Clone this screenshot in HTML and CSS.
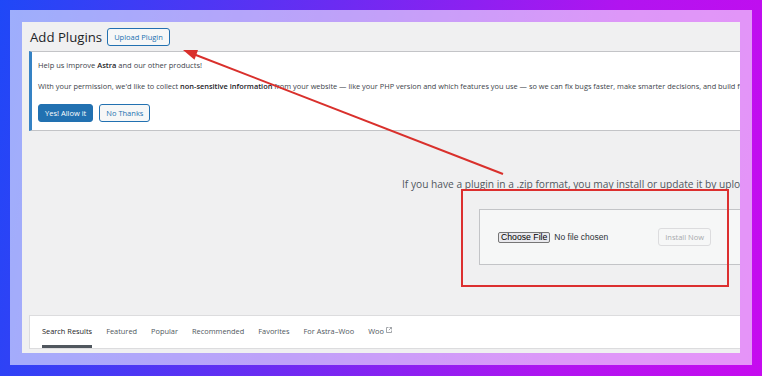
FILE: index.html
```html
<!DOCTYPE html>
<html>
<head>
<meta charset="utf-8">
<link rel="stylesheet" href="styles.css">
</head>
<body>
<div class="frame">
  <div class="wp">
    <div class="title-row">
      <h1 class="title">Add Plugins</h1>
      <span class="btn-outline">Upload Plugin</span>
    </div>
    <div class="notice">
      <p class="notice-line">Help us improve <b>Astra</b> and our other products!</p>
      <p class="notice-line second">With your permission, we'd like to collect <b>non-sensitive information</b> from your website — like your PHP version and which features you use — so we can fix bugs faster, make smarter decisions, and build features that actually matter to you.</p>
      <div class="notice-actions">
        <span class="btn-primary">Yes! Allow it</span>
        <span class="btn-secondary">No Thanks</span>
      </div>
    </div>
    <div class="upload">
      <p class="upload-help">If you have a plugin in a .zip format, you may install or update it by uploading it here.</p>
      <div class="upload-form">
        <span class="file-btn">Choose File</span>
        <span class="file-name">No file chosen</span>
        <span class="btn-disabled">Install Now</span>
      </div>
    </div>
    <div class="tabs">
      <span class="tab active">Search Results</span>
      <span class="tab">Featured</span>
      <span class="tab">Popular</span>
      <span class="tab">Recommended</span>
      <span class="tab">Favorites</span>
      <span class="tab">For Astra–Woo</span>
      <span class="tab">Woo <svg class="ext" width="6" height="6" viewBox="0 0 6 6"><path d="M2.5 0.5H0.5V5.5H5.5V3.5M3.5 0.5H5.5V2.5M5.5 0.5L2.8 3.2" fill="none" stroke="#8c8f94" stroke-width="0.8"/></svg></span>
    </div>
  </div>
</div>
<svg class="annot" width="762" height="376" viewBox="0 0 762 376">
  <line x1="503" y1="174" x2="192" y2="53.5" stroke="#d9302c" stroke-width="2"/>
  <polygon points="183,50 194.5,59.8 198,50" fill="#d9302c"/>
  <rect x="462" y="190" width="266" height="96" fill="none" stroke="#dc2f2f" stroke-width="2"/>
</svg>
</body>
</html>
```
FILE: styles.css
```css
html, body {
  margin: 0;
  padding: 0;
}
body {
  width: 762px;
  height: 376px;
  overflow: hidden;
  position: relative;
  background: linear-gradient(100deg, #1f48f7 0%, #6a2cf2 40%, #b114f0 75%, #c60bef 100%);
  font-family: "Open Sans", "Noto Sans", sans-serif;
}
.frame {
  position: absolute;
  left: 10px;
  top: 10px;
  width: 718px;
  height: 331px;
  padding: 12px;
  background: rgba(255, 255, 255, 0.56);
}
.wp {
  width: 718px;
  height: 331px;
  background: #f0f0f1;
  overflow: hidden;
  display: flex;
  flex-direction: column;
  padding-left: 7px;
  box-sizing: border-box;
}
.title-row {
  display: flex;
  align-items: center;
  gap: 5px;
  margin-top: 6px;
  height: 18px;
}
.title {
  margin: 0 0 0 1px;
  font-size: 13.2px;
  font-weight: 400;
  color: #1d2327;
  line-height: 18px;
}
.btn-outline {
  box-sizing: border-box;
  height: 18px;
  padding: 0 6px;
  border: 1px solid #2271b1;
  border-radius: 3px;
  background: #f6f7f7;
  color: #2271b1;
  font-size: 7.5px;
  line-height: 16px;
}
.notice {
  margin-top: 5px;
  width: 760px;
  height: 80px;
  box-sizing: border-box;
  background: #fff;
  border: 1px solid #c3c4c7;
  border-left: 3px solid #3582c4;
  padding: 7px 0 0 6px;
  display: flex;
  flex-direction: column;
  flex-shrink: 0;
}
.notice-line {
  margin: 0;
  font-size: 7.5px;
  line-height: 12px;
  color: #3c434a;
  white-space: nowrap;
}
.notice-line b {
  font-weight: 600;
  color: #1d2327;
}
.notice-line.second {
  font-size: 7.4px;
  margin-top: 9px;
}
.notice-actions {
  display: flex;
  gap: 6px;
  margin-top: 12px;
}
.btn-primary, .btn-secondary {
  box-sizing: border-box;
  height: 18px;
  padding: 0 6px;
  border-radius: 3px;
  font-size: 7.5px;
  line-height: 16px;
}
.btn-primary {
  background: #2271b1;
  border: 1px solid #2271b1;
  color: #fff;
}
.btn-secondary {
  background: #f6f7f7;
  border: 1px solid #2271b1;
  color: #2271b1;
}
.upload {
  display: flex;
  flex-direction: column;
  flex-shrink: 0;
}
.upload-help {
  margin: 46px 0 0 373px;
  font-size: 10.2px;
  line-height: 14px;
  color: #50575e;
  white-space: nowrap;
}
.upload-form {
  margin: 18px 0 0 450px;
  width: 300px;
  height: 56px;
  box-sizing: border-box;
  background: #f6f7f7;
  border: 1px solid #c3c4c7;
  display: flex;
  align-items: center;
  padding-left: 18px;
  flex-shrink: 0;
}
.file-btn {
  box-sizing: border-box;
  height: 11px;
  padding: 0 2px;
  border: 1px solid #767676;
  border-radius: 2px;
  background: #e9e9ed;
  color: #000;
  font-family: "Liberation Sans", Arial, sans-serif;
  font-size: 8.7px;
  line-height: 9px;
}
.file-name {
  margin-left: 4px;
  font-family: "Liberation Sans", Arial, sans-serif;
  font-size: 8.5px;
  color: #2c3338;
}
.btn-disabled {
  margin-left: 50px;
  box-sizing: border-box;
  height: 18px;
  padding: 0 6px;
  border: 1px solid #dcdcde;
  border-radius: 3px;
  background: #f6f7f7;
  color: #a7aaad;
  font-size: 7.5px;
  line-height: 16px;
}
.tabs {
  margin-top: 50px;
  width: 760px;
  height: 34px;
  box-sizing: border-box;
  background: #fff;
  border: 1px solid #dcdcde;
  display: flex;
  align-items: stretch;
  gap: 14px;
  padding-left: 12px;
  flex-shrink: 0;
}
.tab {
  font-size: 7.4px;
  color: #50575e;
  display: flex;
  align-items: center;
  gap: 2px;
  border-bottom: 3px solid transparent;
  padding-top: 1px;
}
.tab.active {
  color: #1d2327;
  border-bottom-color: #50575e;
}
.ext {
  margin-top: -2px;
}
.annot {
  position: absolute;
  left: 0;
  top: 0;
}
```
